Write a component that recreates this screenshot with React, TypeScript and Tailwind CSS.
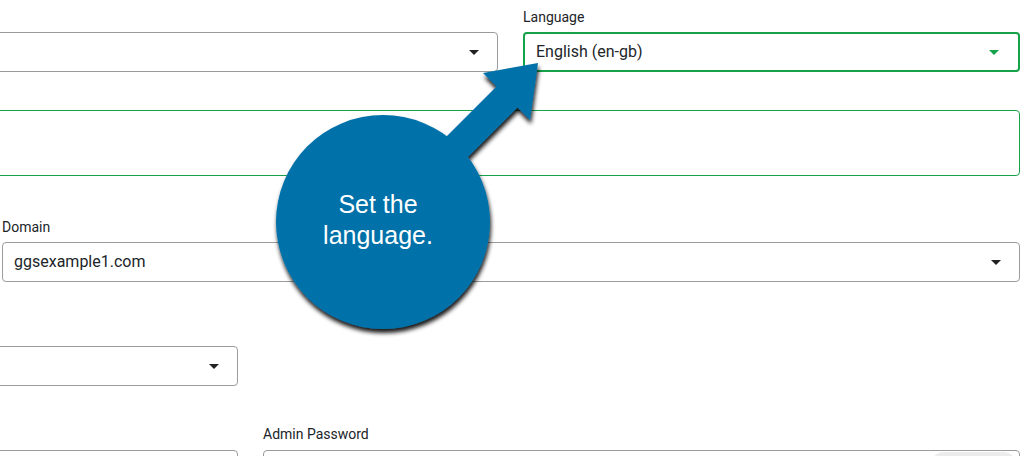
import React from "react";

const Caret = ({ green }: { green?: boolean }) => (
  <span
    className={`block w-0 h-0 border-l-[5px] border-r-[5px] border-t-[5px] border-l-transparent border-r-transparent ${
      green ? "border-t-[#15a34a]" : "border-t-[#222222]"
    }`}
  />
);

const Select = ({
  value,
  green,
  className = "",
}: {
  value?: string;
  green?: boolean;
  className?: string;
}) => (
  <div
    className={`flex items-center justify-between h-[40px] rounded-[4px] bg-white ${
      green ? "border-2 border-[#15a34a] pl-[11px] pr-[19px]" : "border border-[#9b9b9b] pl-[11px] pr-[18px]"
    } ${className}`}
  >
    <span className="text-[16px] text-[#212529] leading-none">{value}</span>
    <Caret green={green} />
  </div>
);

const Label = ({ text }: { text?: string }) => (
  <div className="h-5 mb-[5px] text-[14px] leading-5 text-[#212529]">{text}</div>
);

export default function App() {
  return (
    <div className="relative w-[1024px] h-[456px] overflow-hidden bg-white font-['Roboto',sans-serif]">
      <div className="ml-[-40px] w-[1060px] pt-[7px]">
        {/* Row 1 */}
        <div className="flex gap-[25px]">
          <div className="flex-1">
            <Label />
            <Select />
          </div>
          <div className="w-[497px]">
            <Label text="Language" />
            <Select value="English (en-gb)" green />
          </div>
        </div>

        {/* Textarea */}
        <div className="mt-[38px] h-[66px] rounded-[4px] border border-[#15a34a]" />

        {/* Domain */}
        <div className="mt-[41px] pl-[42px]">
          <Label text="Domain" />
          <Select value="ggsexample1.com" />
        </div>

        {/* Row 4 */}
        <div className="mt-[39px]">
          <Label />
          <Select className="w-[278px]" />
        </div>

        {/* Row 5 */}
        <div className="mt-[38px] flex gap-[25px]">
          <div className="w-[278px]">
            <div className="h-5 mb-[6px]" />
            <div className="h-[40px] rounded-[4px] border border-[#9b9b9b]" />
          </div>
          <div className="flex-1">
            <div className="h-5 mb-[6px] text-[14px] leading-5 text-[#212529]">Admin Password</div>
            <div className="relative h-[40px] rounded-[4px] border border-[#9b9b9b]">
              <div className="absolute top-[1px] right-[2px] h-[36px] w-[87px] rounded-[14px] bg-[#ececec]" />
            </div>
          </div>
        </div>
      </div>

      {/* Callout overlay */}
      <svg
        className="absolute left-0 top-0 pointer-events-none"
        width="1024"
        height="456"
        viewBox="0 0 1024 456"
      >
        <defs>
          <filter id="sh" x="-20%" y="-20%" width="140%" height="140%">
            <feDropShadow dx="1" dy="4" stdDeviation="2.2" floodColor="#000" floodOpacity="0.9" />
          </filter>
        </defs>
        <g filter="url(#sh)" fill="#0171a9">
          <circle cx="383" cy="222" r="107" />
          <polygon points="372,211 496.5,86.5 483,73 538,63 530,120 517.5,107.5 393,232" />
        </g>
      </svg>
      <div className="absolute left-[283px] top-[189px] w-[190px] text-center text-white text-[25px] leading-[31px] font-['Liberation_Sans',Arial,sans-serif]">
        Set the
        <br />
        language.
      </div>
    </div>
  );
}
